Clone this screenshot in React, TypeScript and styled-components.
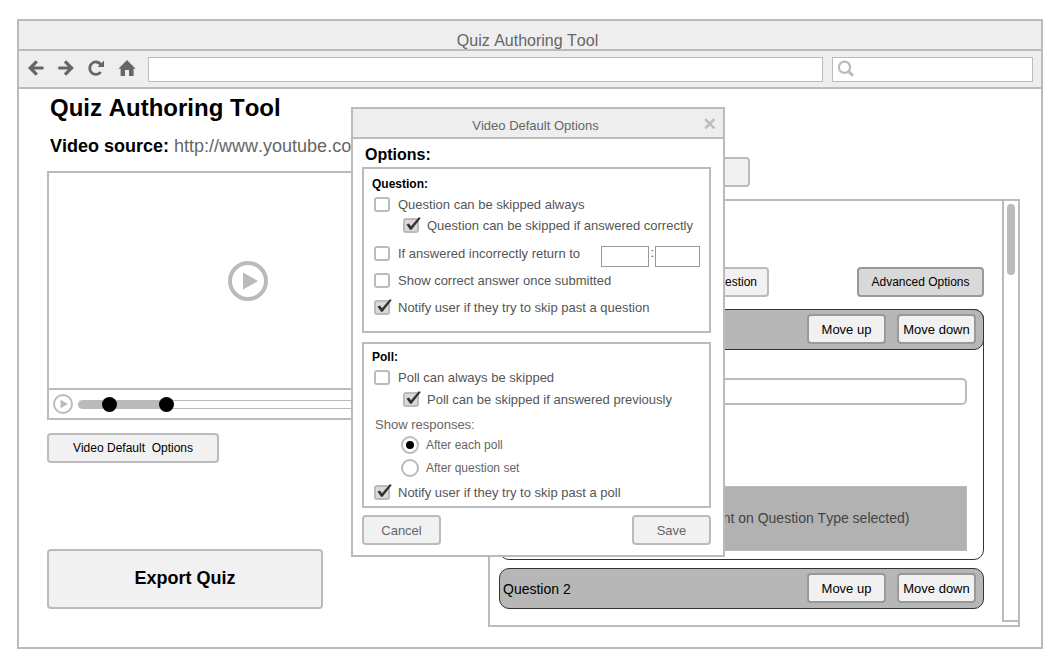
import React, { useState } from "react";
import styled, { createGlobalStyle } from "styled-components";

const line = "#bbbbbb";
const ink = "#666666";

const GlobalStyle = createGlobalStyle`
  *, *::before, *::after { box-sizing: border-box; }
  body {
    margin: 0;
    background: #ffffff;
    color: #000000;
    font-family: "Liberation Sans", Arial, sans-serif;
    font-kerning: none;
  }
  button, input { font-family: inherit; font-kerning: inherit; margin: 0; }
  h1, h2, h3, p { margin: 0; }
`;

const Page = styled.div`
  padding: 19px 19px 19px 17px;
`;

const BrowserWindow = styled.div`
  position: relative;
  border: 2px solid ${line};
`;

const TitleBar = styled.header`
  height: 30px;
  padding-top: 10px;
  overflow: hidden;
  background: #eeeeee;
  border-bottom: 2px solid ${line};
  color: ${ink};
  font-size: 16px;
  line-height: 20px;
  text-align: center;
  padding-right: 5px;
`;

const Toolbar = styled.nav`
  display: flex;
  align-items: center;
  height: 38px;
  padding: 0 8px 0 7px;
  background: #eeeeee;
  border-bottom: 2px solid ${line};
`;

const NavIcons = styled.div`
  display: flex;
  gap: 10px;
  margin-right: 12px;
  padding-bottom: 2px;
`;

const IconButton = styled.button`
  display: flex;
  align-items: center;
  justify-content: center;
  width: 20px;
  height: 20px;
  padding: 0;
  border: 0;
  background: none;
`;

const AddressInput = styled.input`
  flex: 1;
  min-width: 0;
  height: 25px;
  border: 1px solid ${line};
  border-radius: 0;
  background: #ffffff;
  margin-right: 9px;
`;

const SearchBox = styled.label`
  display: flex;
  align-items: center;
  width: 201px;
  height: 25px;
  padding-left: 4px;
  border: 1px solid ${line};
  background: #ffffff;
`;

const SearchInput = styled.input`
  flex: 1;
  min-width: 0;
  border: 0;
  background: none;
  outline: none;
`;

const Workspace = styled.main`
  display: grid;
  grid-template-columns: 402fr 532fr;
  column-gap: 39px;
  padding: 0 21px 20px 28px;
`;

const Column = styled.section`
  display: flex;
  flex-direction: column;
  align-items: flex-start;
  min-width: 0;
`;

const PageTitle = styled.h1`
  margin: 4px 0 0 3px;
  font-size: 24px;
  line-height: 30px;
`;

const Source = styled.p`
  margin: 13px 0 14px 3px;
  font-size: 18px;
  line-height: 21px;
  white-space: nowrap;
`;

const SourceUrl = styled.a`
  color: ${ink};
  text-decoration: none;
`;

const Player = styled.div`
  align-self: stretch;
  border: 2px solid ${line};
`;

const Screen = styled.div`
  display: flex;
  align-items: center;
  justify-content: center;
  height: 215px;
`;

const Controls = styled.div`
  display: flex;
  align-items: center;
  gap: 5px;
  height: 30px;
  padding: 0 8px 0 4px;
  border-top: 2px solid ${line};
`;

const Timeline = styled.div`
  position: relative;
  flex: 1;
  height: 15px;
`;

const Seek = styled.input`
  appearance: none;
  display: block;
  width: 100%;
  height: 15px;
  background: none;

  &::-webkit-slider-runnable-track {
    height: 9px;
    border: 1px solid ${line};
    border-radius: 4px;
    background: linear-gradient(to right, ${line} 25%, #ffffff 25%);
  }
  &::-webkit-slider-thumb {
    appearance: none;
    width: 15px;
    height: 15px;
    margin-top: -4px;
    border-radius: 50%;
    background: #000000;
  }
`;

const Marker = styled.span`
  position: absolute;
  top: 0;
  left: 24px;
  width: 15px;
  height: 15px;
  border-radius: 50%;
  background: #000000;
`;

const Button = styled.button<{
  $width?: number;
  $size?: number;
  $tone?: "strong" | "pressed";
  $muted?: boolean;
}>`
  width: ${(p) => (p.$width ? `${p.$width}px` : "auto")};
  height: 30px;
  padding: 0 10px;
  border: 2px solid ${(p) => (p.$tone ? "#999999" : line)};
  border-radius: 4px;
  background: ${(p) => (p.$tone === "pressed" ? "#d9d9d9" : "#f1f1f1")};
  color: ${(p) => (p.$muted ? ink : "#000000")};
  font-size: ${(p) => p.$size ?? 12}px;
  line-height: 16px;
  white-space: pre;
`;

const MoveButton = styled(Button).attrs({ $width: 79, $size: 13, $tone: "strong" })`
  padding: 2px 0 0;
`;

const DialogButton = styled(Button).attrs({ $width: 79, $size: 13, $muted: true })`
  padding: 2px 0 0;
`;

const DefaultsButton = styled(Button)`
  margin-top: 13px;
`;

const ExportButton = styled(Button)`
  height: 60px;
  margin-top: 86px;
  padding-bottom: 2px;
  font-weight: bold;
`;

const LoadButton = styled(Button)`
  margin: 68px 0 12px 148px;
`;

const Panel = styled.div`
  display: flex;
  align-self: stretch;
  align-items: flex-start;
  height: 428px;
  border: 2px solid ${line};
`;

const PanelBody = styled.div`
  flex: 1;
  min-width: 0;
  padding: 66px 18px 0 9px;
`;

const ScrollTrack = styled.div`
  width: 16px;
  height: 421px;
  padding: 3px 3px;
  border-left: 2px solid ${line};
  border-bottom: 2px solid ${line};
`;

const ScrollThumb = styled.div`
  width: 8px;
  height: 71px;
  border-radius: 4px;
  background: ${line};
`;

const ActionRow = styled.div`
  display: flex;
  justify-content: flex-end;
  gap: 88px;
  margin-bottom: 12px;
`;

const QuestionCard = styled.article`
  height: 251px;
  margin-bottom: 8px;
  border: 1px solid #333333;
  border-radius: 10px;
`;

const QuestionBar = styled.div<{ $nested?: boolean }>`
  display: flex;
  align-items: flex-start;
  gap: 11px;
  height: 41px;
  margin: ${(p) => (p.$nested ? "-1px" : "0")};
  padding: 4px 7px 0 3px;
  border: 1px solid #333333;
  border-radius: 10px;
  background: #b7b7b7;
`;

const QuestionName = styled.h2`
  flex: 1;
  font-size: 14px;
  font-weight: normal;
  line-height: 32px;
`;

const QuestionBody = styled.div`
  display: flex;
  flex-direction: column;
  gap: 81px;
  padding: 29px 16px 0 53px;
`;

const QuestionInput = styled.input`
  height: 27px;
  border: 2px solid ${line};
  border-radius: 5px;
  background: #ffffff;
`;

const TypeContent = styled.div`
  display: flex;
  align-items: center;
  justify-content: center;
  height: 65px;
  padding-bottom: 2px;
  border: 1px solid ${line};
  background: #b2b2b2;
  color: #444444;
  font-size: 14px;
  line-height: 20px;
  white-space: nowrap;
`;

const Dialog = styled.div`
  position: absolute;
  top: 86px;
  left: 332px;
  width: 374px;
  border: 2px solid ${line};
  background: #ffffff;
`;

const DialogHeader = styled.div`
  display: flex;
  align-items: flex-start;
  height: 30px;
  padding: 5px 3px 0 18px;
  background: #eeeeee;
  border-bottom: 2px solid ${line};
`;

const DialogTitle = styled.h2`
  flex: 1;
  color: ${ink};
  font-size: 13px;
  font-weight: normal;
  line-height: 23px;
  text-align: center;
`;

const DialogBody = styled.form`
  padding: 6px 12px 10px 9px;
`;

const OptionsHeading = styled.h2`
  margin-left: 3px;
  font-size: 16px;
  line-height: 20px;
  margin-bottom: 2px;
`;

const Group = styled.section<{ $top: number }>`
  height: 166px;
  padding: ${(p) => p.$top}px 8px 0;
  border: 2px solid ${line};

  & + & { margin-top: 9px; }
`;

const GroupTitle = styled.h3`
  font-size: 12px;
  line-height: 16px;
  margin-bottom: 2px;
`;

const OptionRow = styled.div<{ $gap?: number; $indent?: boolean }>`
  display: flex;
  justify-content: space-between;
  margin-top: ${(p) => p.$gap ?? 0}px;
  padding-left: ${(p) => (p.$indent ? 31 : 2)}px;
`;

const OptionLabel = styled.label`
  display: flex;
  align-items: center;
  gap: 8px;
  height: 21px;
  color: #555555;
  font-size: 13px;
  line-height: 21px;
  white-space: nowrap;
`;

const CheckFrame = styled.span`
  position: relative;
  display: block;
  width: 16px;
  height: 15px;
`;

const CheckInput = styled.input`
  appearance: none;
  display: block;
  width: 16px;
  height: 15px;
  border: 2px solid ${line};
  border-radius: 3px;
  background: #ffffff;

  &:checked { background: #d9d9d9; }
`;

const CheckMark = styled.svg`
  position: absolute;
  left: 2px;
  bottom: 2px;
  pointer-events: none;
`;

const TimeFields = styled.span`
  display: flex;
  align-self: flex-end;
  gap: 1px;
  height: 24px;
  padding: 3px 1px 0 0;
  color: #555555;
  font-size: 13px;
  line-height: 14px;
`;

const TimeInput = styled.input<{ $width: number }>`
  width: ${(p) => p.$width}px;
  height: 21px;
  border: 1px solid #999999;
  border-radius: 0;
  background: #ffffff;
`;

const Subheading = styled.p`
  margin: 7px 0 0 3px;
  color: ${ink};
  font-size: 13px;
  line-height: 16px;
`;

const RadioLabel = styled.label`
  display: flex;
  align-items: center;
  gap: 7px;
  height: 23px;
  padding-left: 29px;
  color: ${ink};
  font-size: 12px;
  line-height: 16px;
`;

const RadioInput = styled.input`
  appearance: none;
  display: grid;
  place-items: center;
  width: 18px;
  height: 18px;
  border: 2px solid ${line};
  border-radius: 50%;
  background: #ffffff;

  &:checked::before {
    content: "";
    width: 8px;
    height: 8px;
    border-radius: 50%;
    background: #000000;
  }
`;

const DialogActions = styled.div`
  display: flex;
  justify-content: space-between;
  margin-top: 7px;
`;

function PlayIcon({ size, stroke }: { size: number; stroke: number }) {
  return (
    <svg width={size} height={size} viewBox="0 0 40 40">
      <circle cx="20" cy="20" r={20 - stroke / 2} fill="none" stroke={line} strokeWidth={stroke} />
      <path d="M15 11.5 L30 20 L15 28.5 Z" fill={line} />
    </svg>
  );
}

interface CheckOptionProps {
  label: string;
  defaultChecked?: boolean;
  gap?: number;
  indent?: boolean;
  children?: React.ReactNode;
}

function CheckOption({ label, defaultChecked = false, gap, indent, children }: CheckOptionProps) {
  const [checked, setChecked] = useState(defaultChecked);
  return (
    <OptionRow $gap={gap} $indent={indent}>
      <OptionLabel>
        <CheckFrame>
          <CheckInput type="checkbox" checked={checked} onChange={() => setChecked(!checked)} />
          {checked && (
            <CheckMark width="16" height="14" viewBox="0 0 16 14">
              <path d="M1.5 7.5 L4 6.5 L6 9.3 L13.8 0.3 L15.8 1 L6.6 12.8 L5 12.8 Z" fill="#333333" />
            </CheckMark>
          )}
        </CheckFrame>
        {label}
      </OptionLabel>
      {children}
    </OptionRow>
  );
}

function MoveButtons() {
  return (
    <>
      <MoveButton type="button">Move up</MoveButton>
      <MoveButton type="button">Move down</MoveButton>
    </>
  );
}

function BrowserToolbar() {
  return (
    <Toolbar aria-label="Browser">
      <NavIcons>
        <IconButton type="button" aria-label="Back">
          <svg width="20" height="20" viewBox="0 0 20 20" fill="none" stroke={ink} strokeWidth="3.2">
            <path d="M10.8 3.4 L4.2 10 L10.8 16.6" />
            <path d="M4.8 10 H16.4" strokeLinecap="round" strokeWidth="2.8" />
          </svg>
        </IconButton>
        <IconButton type="button" aria-label="Forward">
          <svg width="20" height="20" viewBox="0 0 20 20" fill="none" stroke={ink} strokeWidth="3.2">
            <path d="M9 3.4 L15.6 10 L9 16.6" />
            <path d="M15 10 H3.4" strokeLinecap="round" strokeWidth="2.8" />
          </svg>
        </IconButton>
        <IconButton type="button" aria-label="Reload">
          <svg width="20" height="20" viewBox="0 0 20 20">
            <path d="M15 6.6 A6.2 6.2 0 1 0 14.8 14" fill="none" stroke={ink} strokeWidth="2.8" />
            <path d="M18 2.6 V9 H11.6 Z" fill={ink} />
          </svg>
        </IconButton>
        <IconButton type="button" aria-label="Home">
          <svg width="20" height="20" viewBox="0 0 20 20">
            <path
              d="M11 2 L19.6 10.8 H17.6 V18 H13 V12 H9 V18 H4.6 V10.8 H2.4 Z"
              fill={ink}
            />
          </svg>
        </IconButton>
      </NavIcons>
      <AddressInput type="text" aria-label="Address" />
      <SearchBox>
        <svg width="18" height="18" viewBox="0 0 18 18" fill="none" stroke={line}>
          <circle cx="7.5" cy="7.3" r="5.6" strokeWidth="2.2" />
          <path d="M11.4 11.2 L16 15.8" strokeWidth="3" />
        </svg>
        <SearchInput type="text" aria-label="Search" />
      </SearchBox>
    </Toolbar>
  );
}

function DefaultOptionsDialog() {
  return (
    <Dialog role="dialog" aria-label="Video Default Options">
      <DialogHeader>
        <DialogTitle>Video Default Options</DialogTitle>
        <IconButton type="button" aria-label="Close">
          <svg width="12" height="12" viewBox="0 0 12 12" stroke={line} strokeWidth="2.4">
            <path d="M1.2 1.2 L10.4 10.4 M10.4 1.2 L1.2 10.4" />
          </svg>
        </IconButton>
      </DialogHeader>
      <DialogBody onSubmit={(e) => e.preventDefault()}>
        <OptionsHeading>Options:</OptionsHeading>
        <Group $top={7}>
          <GroupTitle>Question:</GroupTitle>
          <CheckOption label="Question can be skipped always" />
          <CheckOption label="Question can be skipped if answered correctly" indent defaultChecked />
          <CheckOption label="If answered incorrectly return to" gap={7}>
            <TimeFields>
              <TimeInput $width={48} type="text" aria-label="Minutes" />:
              <TimeInput $width={45} type="text" aria-label="Seconds" />
            </TimeFields>
          </CheckOption>
          <CheckOption label="Show correct answer once submitted" gap={3} />
          <CheckOption label="Notify user if they try to skip past a question" gap={6} defaultChecked />
        </Group>
        <Group $top={5}>
          <GroupTitle>Poll:</GroupTitle>
          <CheckOption label="Poll can always be skipped" />
          <CheckOption label="Poll can be skipped if answered previously" indent gap={1} defaultChecked />
          <Subheading>Show responses:</Subheading>
          <RadioLabel>
            <RadioInput type="radio" name="responses" defaultChecked />
            After each poll
          </RadioLabel>
          <RadioLabel>
            <RadioInput type="radio" name="responses" />
            After question set
          </RadioLabel>
          <CheckOption label="Notify user if they try to skip past a poll" gap={3} defaultChecked />
        </Group>
        <DialogActions>
          <DialogButton type="button">Cancel</DialogButton>
          <DialogButton type="submit">Save</DialogButton>
        </DialogActions>
      </DialogBody>
    </Dialog>
  );
}

export default function App() {
  return (
    <Page>
      <GlobalStyle />
      <BrowserWindow>
        <TitleBar>Quiz Authoring Tool</TitleBar>
        <BrowserToolbar />
        <Workspace>
          <Column>
            <PageTitle>Quiz Authoring Tool</PageTitle>
            <Source>
              <b>Video source:</b> <SourceUrl href="#">http://www.youtube.com</SourceUrl>
            </Source>
            <Player>
              <Screen>
                <PlayIcon size={40} stroke={4} />
              </Screen>
              <Controls>
                <PlayIcon size={20} stroke={4} />
                <Timeline>
                  <Seek type="range" min="0" max="300" defaultValue="70" aria-label="Seek" />
                  <Marker />
                </Timeline>
              </Controls>
            </Player>
            <DefaultsButton type="button" $width={172}>{"Video Default  Options"}</DefaultsButton>
            <ExportButton type="button" $width={276} $size={18}>Export Quiz</ExportButton>
          </Column>
          <Column>
            <LoadButton type="button" $width={114}>Load Video</LoadButton>
            <Panel>
              <PanelBody>
                <ActionRow>
                  <Button type="button">Add Question</Button>
                  <Button type="button" $width={127} $tone="pressed">Advanced Options</Button>
                </ActionRow>
                <QuestionCard>
                  <QuestionBar $nested>
                    <QuestionName>Question 1</QuestionName>
                    <MoveButtons />
                  </QuestionBar>
                  <QuestionBody>
                    <QuestionInput type="text" aria-label="Question text" />
                    <TypeContent>(Content dependent on Question Type selected)</TypeContent>
                  </QuestionBody>
                </QuestionCard>
                <QuestionBar>
                  <QuestionName>Question 2</QuestionName>
                  <MoveButtons />
                </QuestionBar>
              </PanelBody>
              <ScrollTrack>
                <ScrollThumb />
              </ScrollTrack>
            </Panel>
          </Column>
        </Workspace>
        <DefaultOptionsDialog />
      </BrowserWindow>
    </Page>
  );
}
